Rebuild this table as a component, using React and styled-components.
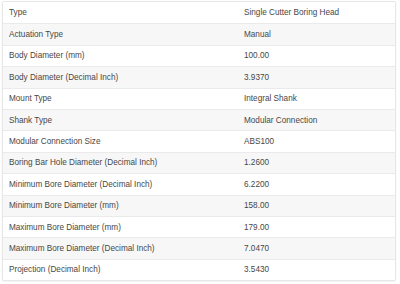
import React from "react";
import styled, { createGlobalStyle } from "styled-components";

const Global = createGlobalStyle`
  html, body { margin: 0; padding: 0; background: #ffffff; }
  body { font-family: "Liberation Sans", Arial, sans-serif; }
`;

const Page = styled.div`
  width: 400px;
  height: 284px;
  padding: 1px 0 0 2px;
  box-sizing: border-box;
  background: #fff;
`;

const Table = styled.div`
  width: 394px;
  box-sizing: border-box;
  border: 1px solid #e6e6e6;
  border-radius: 2px;
  box-shadow: 0 1px 2px rgba(0, 0, 0, 0.05);
  overflow: hidden;
  background: #fff;
`;

const Row = styled.div`
  display: grid;
  grid-template-columns: 235px 1fr;
  height: 21.4px;
  align-items: center;
  background: ${(p) => (p.$striped ? "#f7f7f7" : "#ffffff")};
  border-top: ${(p) => (p.$first ? "none" : "1px solid #eaeaea")};
  box-sizing: border-box;
`;

const Cell = styled.div`
  padding-left: 6px;
  font-size: 8.2px;
  color: #474747;
  white-space: nowrap;
`;

const rows = [
  ["Type", "Single Cutter Boring Head"],
  ["Actuation Type", "Manual"],
  ["Body Diameter (mm)", "100.00"],
  ["Body Diameter (Decimal Inch)", "3.9370"],
  ["Mount Type", "Integral Shank"],
  ["Shank Type", "Modular Connection"],
  ["Modular Connection Size", "ABS100"],
  ["Boring Bar Hole Diameter (Decimal Inch)", "1.2600"],
  ["Minimum Bore Diameter (Decimal Inch)", "6.2200"],
  ["Minimum Bore Diameter (mm)", "158.00"],
  ["Maximum Bore Diameter (mm)", "179.00"],
  ["Maximum Bore Diameter (Decimal Inch)", "7.0470"],
  ["Projection (Decimal Inch)", "3.5430"],
];

export default function App() {
  return (
    <>
      <Global />
      <Page>
        <Table>
          {rows.map(([k, v], i) => (
            <Row key={k} $first={i === 0} $striped={i % 2 === 1}>
              <Cell>{k}</Cell>
              <Cell>{v}</Cell>
            </Row>
          ))}
        </Table>
      </Page>
    </>
  );
}
